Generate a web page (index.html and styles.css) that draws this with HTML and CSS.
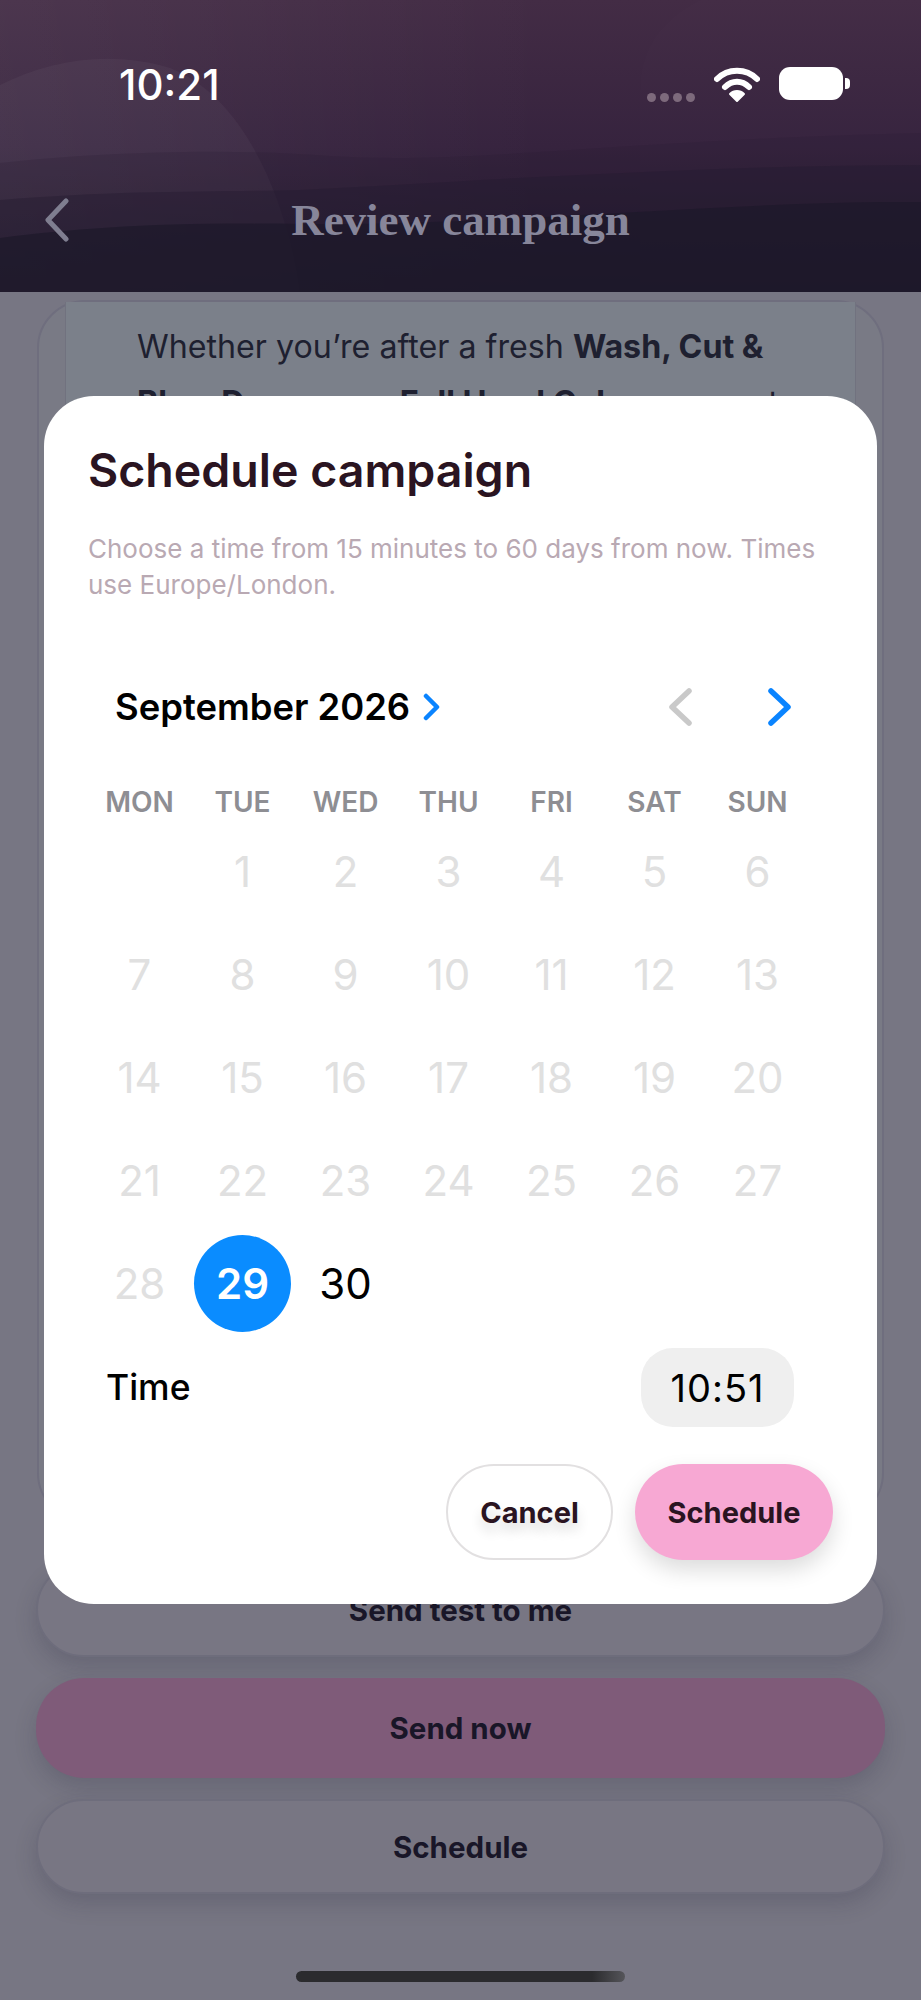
FILE: index.html
```html
<!DOCTYPE html>
<html lang="en">
<head>
  <meta charset="UTF-8">
  <meta name="viewport" content="width=device-width, initial-scale=1.0">
  <title>Review campaign</title>
  <link rel="stylesheet" href="styles.css">
</head>
<body>
  <div class="screen">
    <header class="topbar">
      <svg class="topbar-art" viewBox="0 0 921 292" preserveAspectRatio="none" aria-hidden="true">
        <defs>
          <linearGradient id="sky" x1="0" y1="0" x2="0" y2="1">
            <stop offset="0" stop-color="#432c45"/>
            <stop offset="0.5" stop-color="#36233e"/>
            <stop offset="1" stop-color="#1c1829"/>
          </linearGradient>
          <linearGradient id="tint" x1="0" y1="0" x2="1" y2="0">
            <stop offset="0" stop-color="#fff" stop-opacity="0.05"/>
            <stop offset="0.6" stop-color="#fff" stop-opacity="0"/>
          </linearGradient>
        </defs>
        <rect width="921" height="292" fill="url(#sky)"/>
        <rect width="921" height="292" fill="url(#tint)"/>
        <path d="M0 85 C50 60 110 50 170 68 C240 95 285 190 300 292 L0 292 Z" fill="#fff" opacity="0.035"/>
        <path d="M640 292 V90 C640 50 660 20 700 0 H921 V292 Z" fill="#fff" opacity="0.008"/>
        <path d="M0 163 C100 152 230 148 330 156 C470 165 620 140 921 133 V292 H0 Z" fill="#2a1d33" opacity="0.22"/>
        <path d="M0 200 C120 190 220 192 300 190 C460 182 700 165 921 165 V292 H0 Z" fill="#231a2f" opacity="0.42"/>
        <path d="M0 238 C80 228 160 222 300 224 C500 226 740 200 921 202 V292 H0 Z" fill="#1c1829" opacity="0.7"/>
      </svg>
      <div class="statusbar">
        <span class="clock">10:21</span>
        <div class="status-icons">
          <span class="signal"><i></i><i></i><i></i><i></i></span>
          <svg class="wifi" viewBox="0 0 46 36" aria-hidden="true">
            <path d="M3 12 C14 1 32 1 43 12" />
            <path d="M11 20 C18 13 28 13 35 20" />
            <path d="M23 34 L16 27 C20 23 26 23 30 27 Z" class="wifi-dot"/>
          </svg>
          <span class="battery"></span>
        </div>
      </div>
      <div class="navbar">
        <svg class="back" viewBox="0 0 26 44" aria-hidden="true"><path d="M22 3 L4 22 L22 41"/></svg>
        <h1>Review campaign</h1>
      </div>
    </header>

    <main class="review">
      <section class="preview">
        <div class="preview-body">
          <p>Whether you’re after a fresh <strong>Wash, Cut &amp; Blow Dry</strong> or new <strong>Full Head Colour</strong>, we get</p>
        </div>
      </section>
      <div class="actions">
        <button class="action">Send test to me</button>
        <button class="action action-primary">Send now</button>
        <button class="action">Schedule</button>
      </div>
    </main>

    <div class="home-bar"></div>

    <div class="modal">
      <h2>Schedule campaign</h2>
      <p class="hint">Choose a time from 15 minutes to 60 days from now. Times use Europe/London.</p>

      <div class="month-row">
        <div class="month-label">
          <span>September 2026</span>
          <svg class="month-arrow" viewBox="0 0 18 28" aria-hidden="true"><path d="M3 3 L14 14 L3 25"/></svg>
        </div>
        <div class="month-nav">
          <svg class="nav-off" viewBox="0 0 26 38" aria-hidden="true"><path d="M22 3 L5 19 L22 35"/></svg>
          <svg class="nav-on" viewBox="0 0 26 38" aria-hidden="true"><path d="M4 3 L21 19 L4 35"/></svg>
        </div>
      </div>

      <div class="weekdays">
        <span>MON</span><span>TUE</span><span>WED</span><span>THU</span><span>FRI</span><span>SAT</span><span>SUN</span>
      </div>

      <div class="days">
        <span></span><span>1</span><span>2</span><span>3</span><span>4</span><span>5</span><span>6</span>
        <span>7</span><span>8</span><span>9</span><span>10</span><span>11</span><span>12</span><span>13</span>
        <span>14</span><span>15</span><span>16</span><span>17</span><span>18</span><span>19</span><span>20</span>
        <span>21</span><span>22</span><span>23</span><span>24</span><span>25</span><span>26</span><span>27</span>
        <span>28</span><span class="day-selected">29</span><span class="day-open">30</span>
      </div>

      <div class="time-row">
        <span class="time-label">Time</span>
        <span class="time-value">10:51</span>
      </div>

      <div class="modal-buttons">
        <button class="btn-cancel">Cancel</button>
        <button class="btn-schedule">Schedule</button>
      </div>
    </div>
  </div>
</body>
</html>
```

FILE: styles.css
```css
* {
  box-sizing: border-box;
}

html, body {
  margin: 0;
  padding: 0;
}

body {
  font-family: Inter, "Liberation Sans", sans-serif;
  background-color: #777683;
}

.screen {
  position: relative;
  width: 921px;
  height: 2000px;
  overflow: hidden;
  background-color: #777683;
}

/* top bar */
.topbar {
  position: relative;
  height: 292px;
  padding: 60px 0 0;
  overflow: hidden;
}

.topbar-art {
  position: absolute;
  top: 0;
  left: 0;
  width: 100%;
  height: 100%;
}

.statusbar {
  position: relative;
  display: flex;
  justify-content: space-between;
  align-items: flex-start;
  padding: 0 78px 0 119px;
}

.clock {
  color: #fff;
  font-size: 42px;
  line-height: 50px;
  font-weight: 500;
}

.status-icons {
  display: flex;
  align-items: flex-start;
  gap: 19px;
  padding-top: 7px;
}

.signal {
  display: flex;
  gap: 4px;
  margin-top: 26px;
}

.signal i {
  display: block;
  width: 9px;
  height: 9px;
  border-radius: 50%;
  background-color: #7d6a7c;
}

.wifi {
  width: 46px;
  height: 36px;
}

.wifi path {
  fill: none;
  stroke: #fff;
  stroke-width: 6;
  stroke-linecap: round;
}

.wifi .wifi-dot {
  fill: #fff;
  stroke-width: 2;
  stroke-linejoin: round;
}

.battery {
  position: relative;
  display: block;
  width: 64px;
  height: 33px;
  border-radius: 11px;
  background-color: #fff;
}

.battery::after {
  content: "";
  position: absolute;
  top: 11px;
  right: -7px;
  width: 5px;
  height: 11px;
  border-radius: 0 4px 4px 0;
  background-color: #fff;
}

.navbar {
  position: relative;
  margin-top: 82px;
  height: 56px;
  display: flex;
  align-items: center;
  justify-content: center;
}

.navbar h1 {
  margin: 0;
  font-family: "Liberation Serif", serif;
  font-size: 45px;
  font-weight: 700;
  color: #87869a;
}

.back {
  position: absolute;
  left: 44px;
  top: 6px;
  width: 26px;
  height: 44px;
}

.back path {
  fill: none;
  stroke: #7f7e90;
  stroke-width: 5;
  stroke-linecap: round;
  stroke-linejoin: round;
}

/* page behind the dialog */
.review {
  padding: 8px 36px 0;
}

.preview {
  height: 1221px;
  margin: 0 1px;
  border: 2px solid #6f6e7e;
  border-radius: 48px;
  background-color: #797a85;
  padding: 0 26px;
}

.preview-body {
  height: 100%;
  background-color: #7b808a;
  border-left: 1px solid #71727f;
  border-right: 1px solid #71727f;
  padding: 17px 68px 17px 71px;
}

.preview-body p {
  margin: 0;
  font-size: 32.2px;
  line-height: 56px;
  color: #1e2030;
}

.actions {
  display: flex;
  flex-direction: column;
  gap: 21px;
  margin-top: 41px;
}

.action {
  height: 95px;
  border: 2px solid #6e6d7c;
  border-radius: 48px;
  background-color: #787683;
  box-shadow: 0 10px 22px rgba(40, 40, 60, 0.2);
  font-family: Inter, "Liberation Sans", sans-serif;
  font-size: 29.5px;
  font-weight: 700;
  color: #191628;
}

.action-primary {
  height: 100px;
  border: 0;
  background-color: #7f5b79;
}

.home-bar {
  position: absolute;
  left: 296px;
  bottom: 18px;
  width: 329px;
  height: 11px;
  border-radius: 6px;
  background: linear-gradient(to right, #2b2b2e 90%, #55555a);
}

/* dialog */
.modal {
  position: absolute;
  left: 44px;
  top: 396px;
  width: 833px;
  height: 1208px;
  padding: 46px 44px 0;
  border-radius: 50px;
  background-color: #fff;
}

.modal h2 {
  margin: 0;
  font-size: 46.5px;
  line-height: 56px;
  font-weight: 600;
  color: #2a1421;
}

.hint {
  margin: 33px 0 0;
  width: 745px;
  font-size: 26px;
  line-height: 36px;
  color: #b9a9b3;
}

.month-row {
  display: flex;
  justify-content: space-between;
  align-items: center;
  margin-top: 82px;
  padding: 0 40px 0 27px;
  height: 44px;
}

.month-label {
  display: flex;
  align-items: center;
  gap: 13px;
  font-size: 36.4px;
  font-weight: 600;
  color: #000;
}

.month-arrow {
  width: 18px;
  height: 28px;
}

.month-arrow path,
.month-nav path {
  fill: none;
  stroke-linecap: round;
  stroke-linejoin: round;
}

.month-arrow path {
  stroke-width: 4.5;
}

.month-nav path {
  stroke-width: 5.5;
}

.month-arrow path,
.nav-on path {
  stroke: #0a84ff;
}

.nav-off path {
  stroke: #c9c9c9;
}

.month-nav {
  display: flex;
  gap: 74px;
}

.month-nav svg {
  width: 26px;
  height: 38px;
}

.weekdays,
.days {
  display: grid;
  grid-template-columns: repeat(7, 103px);
  text-align: center;
}

.weekdays {
  margin-top: 55px;
  font-size: 28px;
  font-weight: 600;
  line-height: 36px;
  color: #8e8e93;
}

.days {
  margin-top: 0;
  grid-auto-rows: 103px;
  font-size: 42px;
  color: #e0e0e0;
}

.days span {
  display: flex;
  align-items: center;
  justify-content: center;
}

.days .day-selected {
  width: 97px;
  height: 97px;
  margin: auto;
  border-radius: 50%;
  background-color: #0a8cff;
  color: #fff;
  font-weight: 600;
}

.days .day-open {
  color: #000;
}

.time-row {
  display: flex;
  justify-content: space-between;
  align-items: center;
  margin-top: 13px;
  padding: 0 39px 0 18px;
}

.time-label {
  font-size: 35.5px;
  font-weight: 500;
  color: #000;
}

.time-value {
  width: 153px;
  height: 79px;
  border-radius: 32px;
  background-color: #efefef;
  display: flex;
  align-items: center;
  justify-content: center;
  font-size: 38px;
  letter-spacing: 1px;
  color: #000;
}

.modal-buttons {
  display: flex;
  justify-content: flex-end;
  gap: 22px;
  margin-top: 37px;
}

.modal-buttons button {
  height: 96px;
  border-radius: 48px;
  font-family: Inter, "Liberation Sans", sans-serif;
  font-size: 29px;
  font-weight: 700;
  color: #2a1421;
}

.btn-cancel {
  width: 167px;
  border: 2px solid #e2e0e1;
  background-color: #fff;
  text-shadow: 0 8px 12px rgba(0, 0, 0, 0.15);
}

.btn-schedule {
  width: 198px;
  border: 0;
  background-color: #f7a8d3;
  box-shadow: 0 10px 22px rgba(0, 0, 0, 0.14);
}
```
